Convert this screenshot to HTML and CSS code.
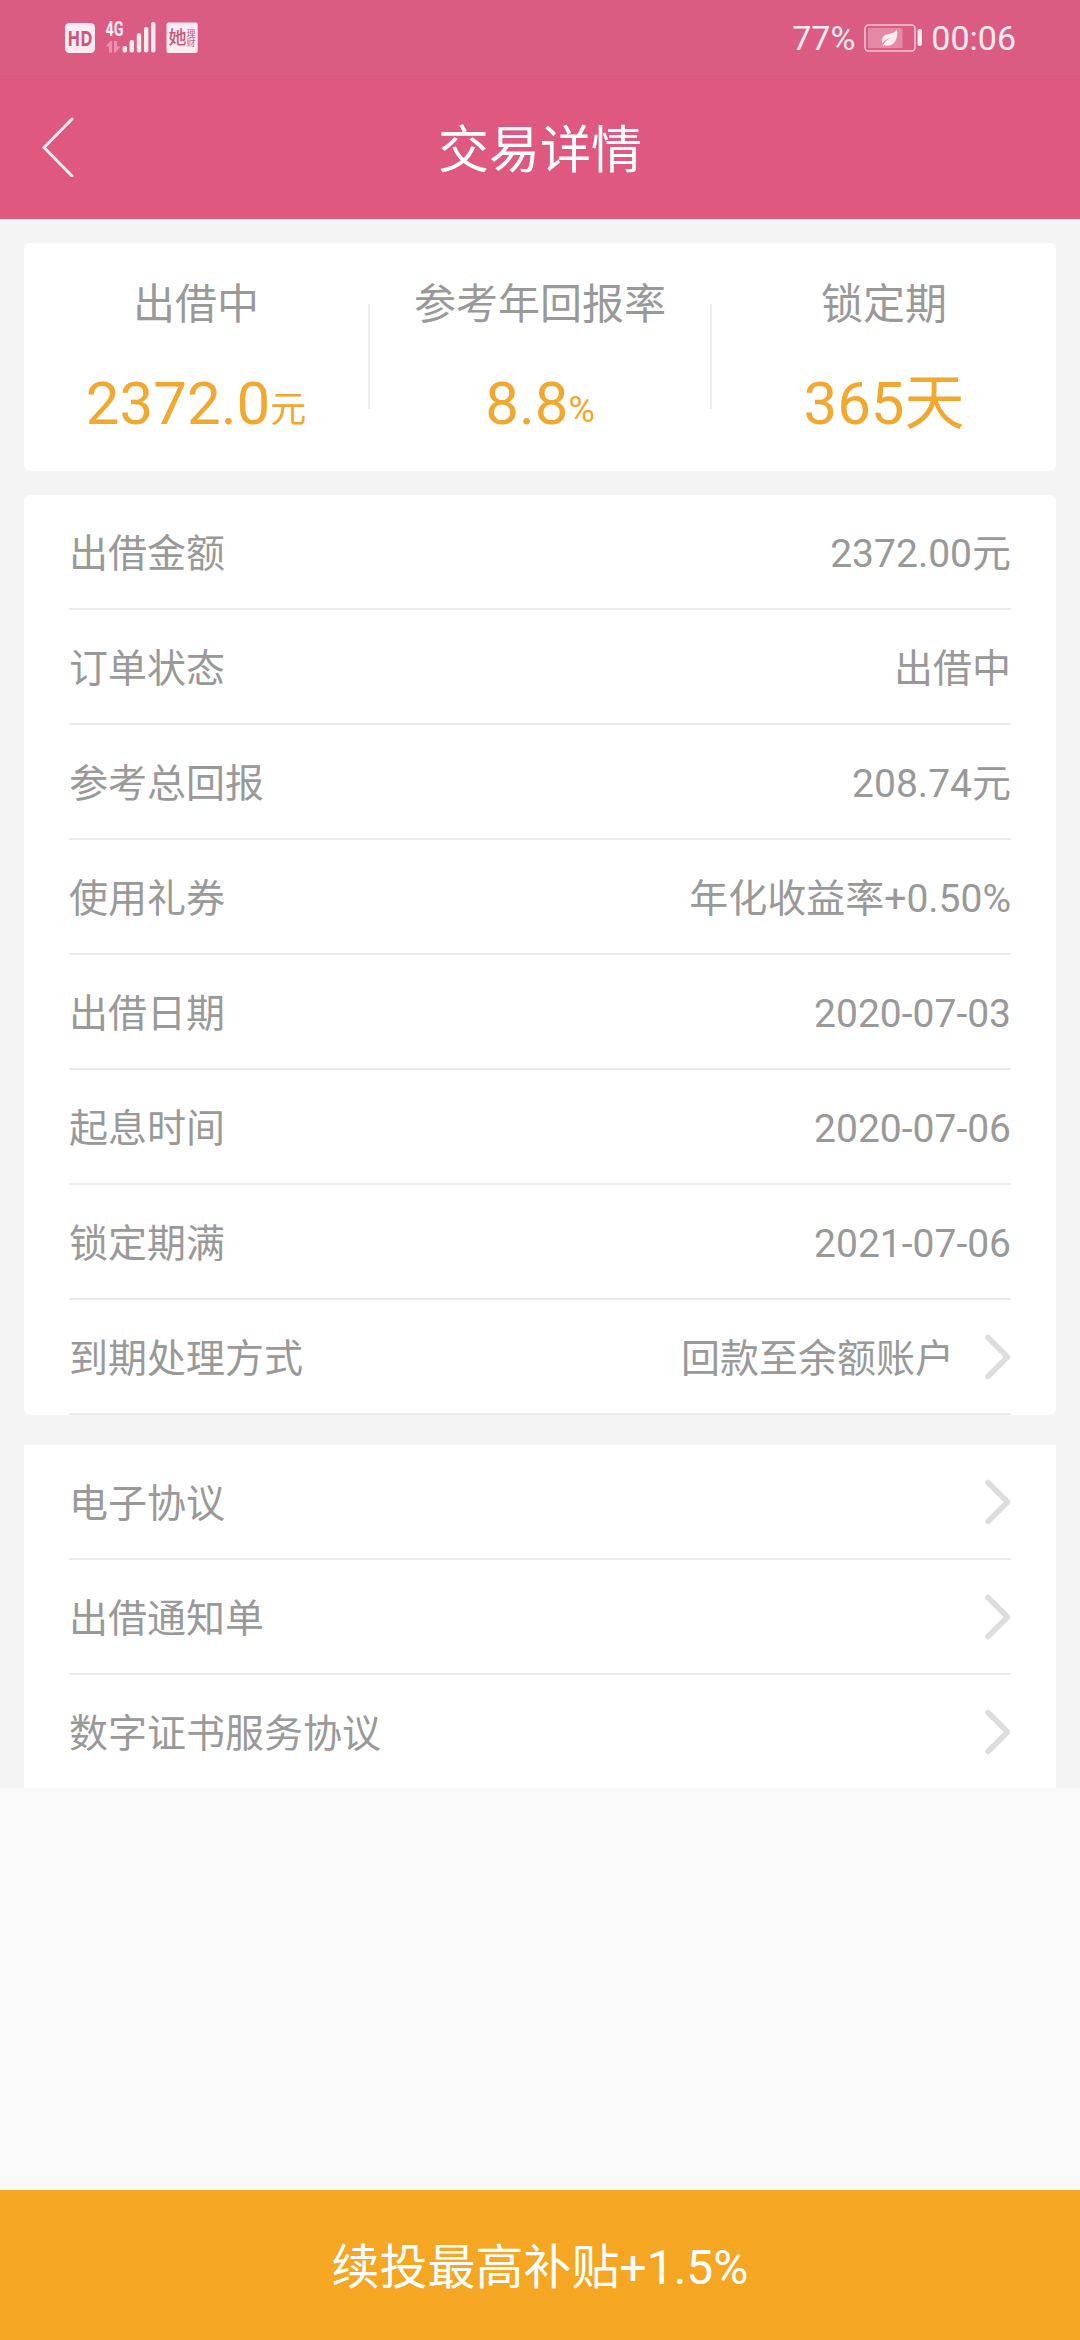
FILE: index.html
```html
<!DOCTYPE html>
<html lang="zh-CN">
<head>
  <meta charset="UTF-8" />
  <meta name="viewport" content="width=device-width, initial-scale=1.0"/>
  <title>交易详情</title>
  <link rel="stylesheet" href="styles.css">
</head>
<body>
  <!-- Status bar -->
  <div class="status">
    <svg class="status-left" width="134" height="44" viewBox="65 16 134 44">
      <rect class="light" x="65" y="23" width="30" height="30" rx="4.5"/>
      <text class="hd" x="80" y="45.500" text-anchor="middle" textLength="25" lengthAdjust="spacingAndGlyphs">HD</text>
      <text class="net" x="105.500" y="36" textLength="18" lengthAdjust="spacingAndGlyphs">4G</text>
      <path class="dim" d="M105.500 46.500l5-5.500h1.500v11.500h-3v-6zM120.500 46.500l-5 6H114V41h3v5.500z"/>
      <rect class="light" x="122.600" y="46" width="4.400" height="6.500" rx="1.800"/>
      <rect class="light" x="129.600" y="40" width="4.400" height="12.500" rx="1.800"/>
      <rect class="light" x="136.800" y="33.300" width="4.400" height="19.200" rx="1.800"/>
      <rect class="light" x="144" y="27" width="4.400" height="25.500" rx="1.800"/>
      <rect class="light" x="151.100" y="22" width="4.400" height="30.500" rx="1.800"/>
      <rect class="light" x="166.500" y="22.500" width="31.200" height="30.500" rx="2"/>
      <text class="app" x="168.500" y="44">她</text>
      <text class="app-small" x="186.500" y="37">理</text>
      <text class="app-small" x="186.500" y="45.500">财</text>
    </svg>
    <div class="status-right">
      <span>77%</span>
      <svg width="59" height="28" viewBox="0 0 59 28">
        <rect class="battery" x="1" y="1" width="50" height="26" rx="3.500"/>
        <rect class="charge" x="4" y="4" width="34.500" height="20" rx="1"/>
        <rect class="light" x="53.500" y="5" width="4.500" height="17" rx="2"/>
        <path class="light" d="M33 6c.8 7-1 12.500-5.500 14.800-2.600 1.200-5 1.200-7 .2-.5.600-.8 1.200-1 1.500l-1-.500c2-4.500 5.500-7 9.500-9-4.500 1.300-7.500 3.500-9.600 6.200C17 13.500 20 11 24.500 10 28 9.300 31 8.500 33 6z"/>
      </svg>
      <span>00:06</span>
    </div>
  </div>

  <!-- Header -->
  <div class="header">
    <a class="back" href="#">
      <svg width="32" height="60" viewBox="0 0 32 60"><path d="M30 2L2 30.500L30 59"/></svg>
    </a>
    <h1>交易详情</h1>
  </div>

  <div class="content">
    <!-- Summary -->
    <div class="card summary">
      <div class="col">
        <p class="label">出借中</p>
        <p class="num">2372.0<small>元</small></p>
      </div>
      <div class="col">
        <p class="label">参考年回报率</p>
        <p class="num">8.8<small>%</small></p>
      </div>
      <div class="col">
        <p class="label">锁定期</p>
        <p class="num">365天</p>
      </div>
    </div>

    <!-- Order details -->
    <div class="card list">
      <div class="row"><span>出借金额</span><span>2372.00元</span></div>
      <div class="row"><span>订单状态</span><span>出借中</span></div>
      <div class="row"><span>参考总回报</span><span>208.74元</span></div>
      <div class="row"><span>使用礼券</span><span>年化收益率+0.50%</span></div>
      <div class="row"><span>出借日期</span><span>2020-07-03</span></div>
      <div class="row"><span>起息时间</span><span>2020-07-06</span></div>
      <div class="row"><span>锁定期满</span><span>2021-07-06</span></div>
      <div class="row">
        <span>到期处理方式</span><span>回款至余额账户</span>
        <svg class="arrow" width="26" height="46" viewBox="0 0 26 46"><path d="M3 3.500L22.500 23L3 42.500"/></svg>
      </div>
    </div>

    <!-- Agreements -->
    <div class="list links">
      <div class="row">
        <span>电子协议</span>
        <svg class="arrow" width="26" height="46" viewBox="0 0 26 46"><path d="M3 3.500L22.500 23L3 42.500"/></svg>
      </div>
      <div class="row">
        <span>出借通知单</span>
        <svg class="arrow" width="26" height="46" viewBox="0 0 26 46"><path d="M3 3.500L22.500 23L3 42.500"/></svg>
      </div>
      <div class="row">
        <span>数字证书服务协议</span>
        <svg class="arrow" width="26" height="46" viewBox="0 0 26 46"><path d="M3 3.500L22.500 23L3 42.500"/></svg>
      </div>
    </div>
  </div>

  <a class="btn" href="#">续投最高补贴+1.5%</a>
</body>
</html>
```
FILE: styles.css
```css
* {
  margin: 0;
  padding: 0;
  box-sizing: border-box;
}

body {
  width: 1080px;
  height: 2340px;
  display: flex;
  flex-direction: column;
  background-color: #fafafa;
  color: #999;
  font-family: Roboto, "Noto Sans CJK SC", sans-serif;
  overflow: hidden;
}

a {
  color: inherit;
  text-decoration: none;
}

/* Status bar */
.status {
  height: 77px;
  padding: 0 64px 1px 65px;
  display: flex;
  justify-content: space-between;
  align-items: center;
  background: #db5c82;
  color: #ffebf2;
}

.status-right {
  display: flex;
  align-items: center;
  gap: 8.5px;
  font-size: 34px;
  line-height: 40px;
}

.light {
  fill: #ffebf2;
}

.dim {
  fill: #ea91ad;
}

.hd {
  font: bold 21px "Open Sans", sans-serif;
  fill: #c9587b;
}

.net {
  font: bold 20px Roboto, sans-serif;
  fill: #ffebf2;
}

.app {
  font: 500 18px "Noto Sans CJK SC", sans-serif;
  fill: #c9587b;
}

.app-small {
  font: 9px "Noto Sans CJK SC", sans-serif;
  fill: #c9587b;
}

.battery {
  fill: none;
  stroke: #f8c3d5;
  stroke-width: 1.6;
}

.charge {
  fill: #e489a6;
}

/* Header */
.header {
  height: 142px;
  padding: 0 42px;
  display: grid;
  grid-template-columns: 32px 1fr 32px;
  align-items: center;
  background: #df5880;
  color: #fff;
}

.header h1 {
  padding-top: 6px;
  font-size: 51px;
  font-weight: 400;
  line-height: 60px;
  text-align: center;
}

.back {
  display: flex;
  padding-bottom: 3px;
}

.back path {
  fill: none;
  stroke: #ffebf2;
  stroke-width: 3;
  stroke-linecap: round;
  stroke-linejoin: round;
}

.content {
  padding: 24px 24px 0;
  background: #f4f4f4;
}

.card {
  background: #fff;
  border-radius: 6px;
}

/* Summary */
.summary {
  height: 228px;
  margin-bottom: 24px;
  display: flex;
  justify-content: space-between;
}

.col {
  width: 344px;
  padding-top: 34px;
  text-align: center;
}

.col:nth-child(2) {
  background: linear-gradient(#ebebeb, #ebebeb) left 61px / 2px 105px no-repeat,
    linear-gradient(#ebebeb, #ebebeb) right 61px / 2px 105px no-repeat;
}

.col .label {
  font-size: 42px;
  line-height: 56px;
}

.num {
  margin-top: 36px;
  color: #f0a830;
  font-size: 60px;
  line-height: 70px;
}

.num small {
  font-size: 36px;
  line-height: 1;
  vertical-align: 2px;
}

/* Rows */
.list {
  padding: 0 45px;
  background: #fff;
}

.row {
  height: 115px;
  border-bottom: 2px solid #ebebeb;
  display: flex;
  align-items: center;
  font-size: 39px;
}

.row span {
  padding-top: 5px;
  line-height: 50px;
}

.row span + span {
  margin-left: auto;
}

.arrow {
  margin-left: auto;
}

.row span + span + .arrow {
  margin-left: 31px;
}

.arrow path {
  fill: none;
  stroke: #ddd;
  stroke-width: 5.5;
  stroke-linecap: round;
  stroke-linejoin: round;
}

.links {
  margin-top: 30px;
}

.links .row:last-child {
  height: 113px;
  border-bottom: none;
}

.btn {
  height: 150px;
  margin-top: auto;
  padding-top: 4px;
  background: #f5a623;
  color: #fff;
  font-size: 48px;
  line-height: 148px;
  text-align: center;
}
```
